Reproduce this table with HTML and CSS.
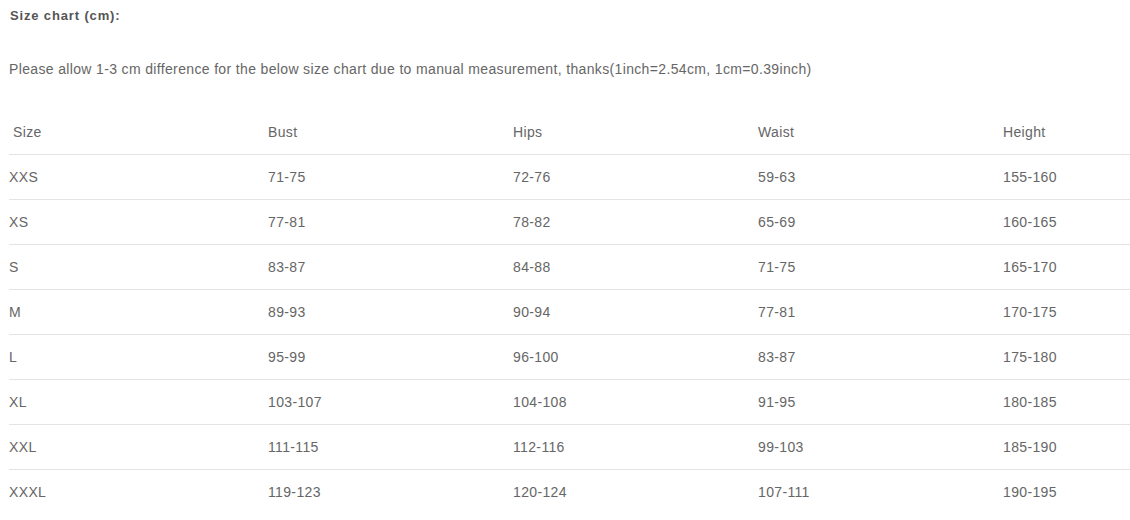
FILE: index.html
```html
<!DOCTYPE html>
<html>
<head>
<meta charset="utf-8">
<link rel="stylesheet" href="styles.css">
</head>
<body>
<div class="page">
  <p class="title">Size chart (cm):</p>
  <p class="note">Please allow 1-3 cm difference for the below size chart due to manual measurement, thanks(1inch=2.54cm, 1cm=0.39inch)</p>
  <div class="chart">
    <div class="row head"><span class="c0">Size</span><span>Bust</span><span>Hips</span><span>Waist</span><span>Height</span></div>
    <div class="row"><span>XXS</span><span>71-75</span><span>72-76</span><span>59-63</span><span>155-160</span></div>
    <div class="row"><span>XS</span><span>77-81</span><span>78-82</span><span>65-69</span><span>160-165</span></div>
    <div class="row"><span>S</span><span>83-87</span><span>84-88</span><span>71-75</span><span>165-170</span></div>
    <div class="row"><span>M</span><span>89-93</span><span>90-94</span><span>77-81</span><span>170-175</span></div>
    <div class="row"><span>L</span><span>95-99</span><span>96-100</span><span>83-87</span><span>175-180</span></div>
    <div class="row"><span>XL</span><span>103-107</span><span>104-108</span><span>91-95</span><span>180-185</span></div>
    <div class="row"><span>XXL</span><span>111-115</span><span>112-116</span><span>99-103</span><span>185-190</span></div>
    <div class="row last"><span>XXXL</span><span>119-123</span><span>120-124</span><span>107-111</span><span>190-195</span></div>
  </div>
</div>
</body>
</html>
```
FILE: styles.css
```css
html, body {
  margin: 0;
  padding: 0;
  background: #fff;
  overflow: hidden;
}
.page {
  padding: 0 0 0 9px;
  font-family: "Liberation Sans", Arial, sans-serif;
  font-size: 14px;
  letter-spacing: 0.35px;
  color: #666;
}
.title {
  margin: 0;
  padding-top: 7px;
  padding-left: 1px;
  height: 17px;
  line-height: 17px;
  font-weight: bold;
  font-size: 13px;
  letter-spacing: 0.85px;
  color: #555;
}
.note {
  margin: 0;
  padding-top: 37px;
  line-height: 16px;
}
.chart {
  margin-top: 34px;
}
.row {
  display: grid;
  grid-template-columns: 259px 245px 245px 245px 1fr;
  height: 44px;
  align-items: center;
  border-bottom: 1px solid #e4e4e4;
  line-height: 16px;
}
.row.head {
  height: 42px;
  align-items: start;
  padding-top: 1px;
}
.row.head span {
  padding-top: 12px;
}
.row.head .c0 {
  padding-left: 4px;
}
.row.last {
  border-bottom: none;
}
```
